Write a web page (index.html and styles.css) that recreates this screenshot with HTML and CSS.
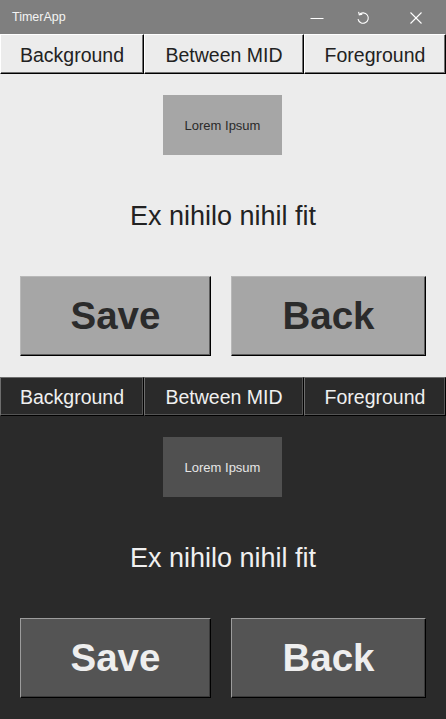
FILE: index.html
```html
<!DOCTYPE html>
<html>
<head>
<meta charset="utf-8">
<title>TimerApp</title>
<link rel="stylesheet" href="styles.css">
</head>
<body>
<div class="app">
  <header class="titlebar">
    <span class="title">TimerApp</span>
    <div class="controls">
      <span class="ctl ctl-min">
        <svg width="14" height="14" viewBox="0 0 14 14"><line x1="0.5" y1="7.5" x2="13.5" y2="7.5" stroke="#fff" stroke-width="1"/></svg>
      </span>
      <span class="ctl ctl-restore">
        <svg width="16" height="16" viewBox="0 0 16 16" fill="none" stroke="#fff" stroke-width="1.1"><path d="M4.2 4.6 A5.2 5.2 0 1 1 3 9.2"/><path d="M3.6 1.8 L4.3 4.8 L7.3 4.2"/></svg>
      </span>
      <span class="ctl ctl-close">
        <svg width="14" height="14" viewBox="0 0 14 14" stroke="#fff" stroke-width="1.1"><line x1="1.5" y1="1.5" x2="12.5" y2="12.5"/><line x1="12.5" y1="1.5" x2="1.5" y2="12.5"/></svg>
      </span>
    </div>
  </header>

  <section class="panel panel-light">
    <nav class="tabs">
      <div class="tab">Background</div>
      <div class="tab">Between MID</div>
      <div class="tab">Foreground</div>
    </nav>
    <div class="body">
      <div class="box">Lorem Ipsum</div>
      <div class="motto">Ex nihilo nihil fit</div>
      <div class="actions">
        <button class="btn">Save</button>
        <button class="btn">Back</button>
      </div>
    </div>
  </section>

  <section class="panel panel-dark">
    <nav class="tabs">
      <div class="tab">Background</div>
      <div class="tab">Between MID</div>
      <div class="tab">Foreground</div>
    </nav>
    <div class="body">
      <div class="box">Lorem Ipsum</div>
      <div class="motto">Ex nihilo nihil fit</div>
      <div class="actions">
        <button class="btn">Save</button>
        <button class="btn">Back</button>
      </div>
    </div>
  </section>
</div>
</body>
</html>
```
FILE: styles.css
```css
* { box-sizing: border-box; }
html, body { margin: 0; padding: 0; }
body {
  width: 446px;
  height: 719px;
  overflow: hidden;
  font-family: "Liberation Sans", Arial, sans-serif;
  background: #2a2a2a;
}
.titlebar {
  height: 34px;
  background: #7f7f7f;
  display: flex;
  align-items: center;
  justify-content: space-between;
  padding-left: 12px;
}
.title {
  color: #f4f4f4;
  font-size: 12.5px;
}
.controls {
  display: flex;
  height: 100%;
}
.ctl {
  display: flex;
  align-items: center;
  justify-content: center;
  padding-top: 1px;
}
.ctl-min { width: 46px; }
.ctl-restore { width: 46px; }
.ctl-close { width: 60px; }

.tabs {
  display: grid;
  grid-template-columns: 144px 160px 142px;
  height: 40px;
}
.tab {
  display: flex;
  align-items: center;
  justify-content: center;
  font-size: 19.5px;
  border: 1px solid;
  padding-top: 2px;
}
.panel-light { background: #ececec; }
.panel-light .tab {
  background: #ececec;
  color: #222;
  border-color: #fff #000 #000 #fff;
  box-shadow: inset -1px -1px 0 #707070;
}
.panel-dark .tabs { height: 39px; }
.panel-dark .tab {
  background: #2a2a2a;
  color: #f0f0f0;
  border-color: #6e6e6e #000 #000 #6e6e6e;
  box-shadow: inset -1px -1px 0 #555;
}

.body {
  padding: 21px 20px 21px;
  display: flex;
  flex-direction: column;
  align-items: center;
}
.box {
  width: 119px;
  height: 60px;
  margin-left: -1px;
  display: flex;
  align-items: center;
  justify-content: center;
  font-size: 13px;
}
.panel-light .box { background: #a6a6a6; color: #2a2a2a; }
.panel-dark .box { background: #505050; color: #e6e6e6; }

.motto {
  height: 121px;
  display: flex;
  align-items: center;
  justify-content: center;
  font-size: 27px;
  padding-top: 2px;
}
.panel-light .motto { color: #222; }
.panel-dark .motto { color: #f0f0f0; }

.actions {
  align-self: stretch;
  display: grid;
  grid-template-columns: 191px 195px;
  column-gap: 20px;
}
.btn {
  height: 80px;
  font-family: "Liberation Sans", Arial, sans-serif;
  font-weight: bold;
  font-size: 38.5px;
  border: 1px solid;
  padding: 0;
  display: flex;
  align-items: center;
  justify-content: center;
}
.panel-light .btn {
  background: #a6a6a6;
  color: #2b2b2b;
  border-color: #b8b8b8 #000 #000 #b8b8b8;
  box-shadow: inset -1px -1px 0 #5c5c5c;
}
.panel-dark .btn {
  background: #545454;
  color: #eeeeee;
  border-color: #9c9c9c #000 #000 #9c9c9c;
  box-shadow: inset -1px -1px 0 #3a3a3a;
}
```
